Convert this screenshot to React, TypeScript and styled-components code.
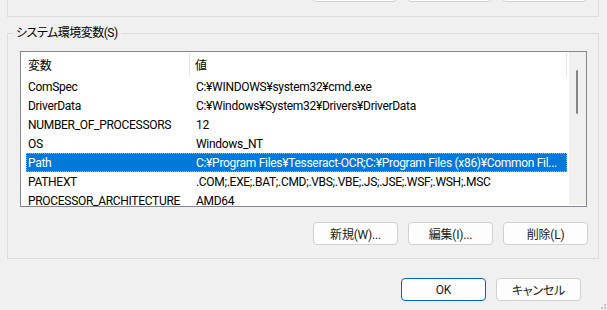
import styled, { createGlobalStyle } from 'styled-components'

type EnvVar = {
    name: string
    value: string
    selected?: boolean
}

const systemVars: EnvVar[] = [
    { name: 'ComSpec', value: 'C:¥WINDOWS¥system32¥cmd.exe' },
    { name: 'DriverData', value: 'C:¥Windows¥System32¥Drivers¥DriverData' },
    { name: 'NUMBER_OF_PROCESSORS', value: '12' },
    { name: 'OS', value: 'Windows_NT' },
    {
        name: 'Path',
        value: 'C:¥Program Files¥Tesseract-OCR;C:¥Program Files (x86)¥Common Fil...',
        selected: true,
    },
    { name: 'PATHEXT', value: '.COM;.EXE;.BAT;.CMD;.VBS;.VBE;.JS;.JSE;.WSF;.WSH;.MSC' },
    { name: 'PROCESSOR_ARCHITECTURE', value: 'AMD64' },
]

const uiFont = `Roboto, "Noto Sans CJK JP", sans-serif`

const GlobalStyle = createGlobalStyle`
  html, body {
    margin: 0;
    padding: 0;
    background: #f0f0f0;
  }
  * {
    box-sizing: border-box;
  }
`

export default function App() {
    return (
        <>
            <GlobalStyle />
            <Dialog>
                {/* bottom edge of the user variables group, scrolled off the top */}
                <TopGroup>
                    <ButtonRow $offset={-21}>
                        <Button aria-label="新規(N)..." />
                        <Button aria-label="編集(E)..." />
                        <Button aria-label="削除(D)" />
                    </ButtonRow>
                </TopGroup>

                <Group>
                    <Legend>システム環境変数(S)</Legend>
                    <GroupBody>
                        <ListView>
                            <ListMain>
                                <Header>
                                    <HeaderCell $width={164} $pad={2}>変数</HeaderCell>
                                    <HeaderCell $pad={5}>値</HeaderCell>
                                </Header>
                                {systemVars.map((v) => (
                                    <Row key={v.name} $selected={v.selected}>
                                        <NameCell>{v.name}</NameCell>
                                        <ValueCell>{v.value}</ValueCell>
                                    </Row>
                                ))}
                            </ListMain>
                            <ScrollBar>
                                <Thumb />
                            </ScrollBar>
                        </ListView>
                        <ButtonRow $offset={15}>
                            <Button>新規(W)...</Button>
                            <Button>編集(I)...</Button>
                            <Button>削除(L)</Button>
                        </ButtonRow>
                    </GroupBody>
                </Group>

                <Footer>
                    <Button $primary>OK</Button>
                    <Button>キャンセル</Button>
                    <Grip>
                        <svg width="6" height="7" viewBox="0 0 6 7">
                            <rect x="3" y="1" width="2" height="2" fill="#c2c2c2" />
                            <rect x="0" y="4" width="2" height="2" fill="#c2c2c2" />
                            <rect x="3" y="4" width="2" height="2" fill="#c2c2c2" />
                        </svg>
                    </Grip>
                </Footer>
            </Dialog>
        </>
    )
}

const Dialog = styled.div`
  width: 607px;
  height: 310px;
  overflow: hidden;
  padding-left: 7px;
  background: #f0f0f0;
  font-family: ${uiFont};
  font-feature-settings: "palt";
  font-size: 12px;
  letter-spacing: -0.3px;
  color: #000;
  display: flex;
  flex-direction: column;
`

const TopGroup = styled.div`
  width: 592px;
  height: 17px;
  flex-shrink: 0;
  border: 1px solid #dcdcdc;
  border-top: 0;
  padding-right: 12px;
`

const Group = styled.fieldset`
  width: 592px;
  margin: 8px 0 0;
  padding: 0;
  border: 1px solid #dcdcdc;
  min-width: 0;
`

const Legend = styled.legend`
  margin-left: 5px;
  padding: 0 3px;
  font-size: 12px;
  line-height: 16px;
  letter-spacing: -0.5px;
  color: #000;
`

const GroupBody = styled.div`
  padding: 10px 11px 13px 12px;
`

const ListView = styled.div`
  width: 567px;
  height: 156px;
  border: 1px solid #828790;
  background: #fff;
  display: flex;
`

const ListMain = styled.div`
  flex: 1;
  overflow: hidden;
  padding: 0 1px 0 5px;
`

const Header = styled.div`
  display: flex;
  height: 25px;
  padding-bottom: 1px;
`

const HeaderCell = styled.div<{ $width?: number; $pad: number }>`
  ${({ $width }) => ($width ? `width: ${$width}px;` : 'flex: 1;')}
  flex-shrink: 0;
  padding-left: ${({ $pad }) => $pad}px;
  margin-top: 1px;
  display: flex;
  align-items: center;
  border-right: 1px solid #e5e5e5;
  white-space: nowrap;
`

const Row = styled.div<{ $selected?: boolean }>`
  display: flex;
  height: 19px;
  align-items: center;
  white-space: nowrap;
  background: ${({ $selected }) => ($selected ? '#0078d7' : 'transparent')};
  color: ${({ $selected }) => ($selected ? '#fff' : '#000')};
  outline: ${({ $selected }) => ($selected ? '1px dotted #ff9b3d' : 'none')};
  outline-offset: -1px;
`

const NameCell = styled.div`
  width: 164px;
  flex-shrink: 0;
  padding-left: 2px;
  overflow: hidden;
`

const ValueCell = styled.div`
  flex: 1;
  padding-left: 6px;
  overflow: hidden;
`

const ScrollBar = styled.div`
  width: 17px;
  flex-shrink: 0;
  margin-left: 1px;
  margin-bottom: 1px;
  background: #f0f0f0;
  padding-top: 18px;
`

const Thumb = styled.div`
  width: 2px;
  height: 44px;
  margin-left: 7px;
  border-radius: 1px;
  background: #868686;
`

const ButtonRow = styled.div<{ $offset: number }>`
  display: flex;
  justify-content: flex-end;
  gap: 10px;
  margin-top: ${({ $offset }) => $offset}px;
  margin-right: -1px;
`

const Button = styled.button<{ $primary?: boolean }>`
  width: 85px;
  height: 23px;
  padding: 0;
  border-radius: 4px;
  border: 1px solid ${({ $primary }) => ($primary ? '#0067c0' : '#d0d0d0')};
  background: #fdfdfd;
  font-family: ${uiFont};
  font-feature-settings: "palt";
  font-size: 12px;
  letter-spacing: -0.2px;
  color: #1b1b1b;
  cursor: pointer;
`

const Footer = styled.div`
  display: flex;
  justify-content: flex-end;
  gap: 10px;
  margin-top: 19px;
  flex: 1;
`

const Grip = styled.div`
  align-self: flex-end;
  width: 6px;
  height: 7px;
  margin-left: 10px;
  display: flex;
  svg {
    display: block;
  }
`
